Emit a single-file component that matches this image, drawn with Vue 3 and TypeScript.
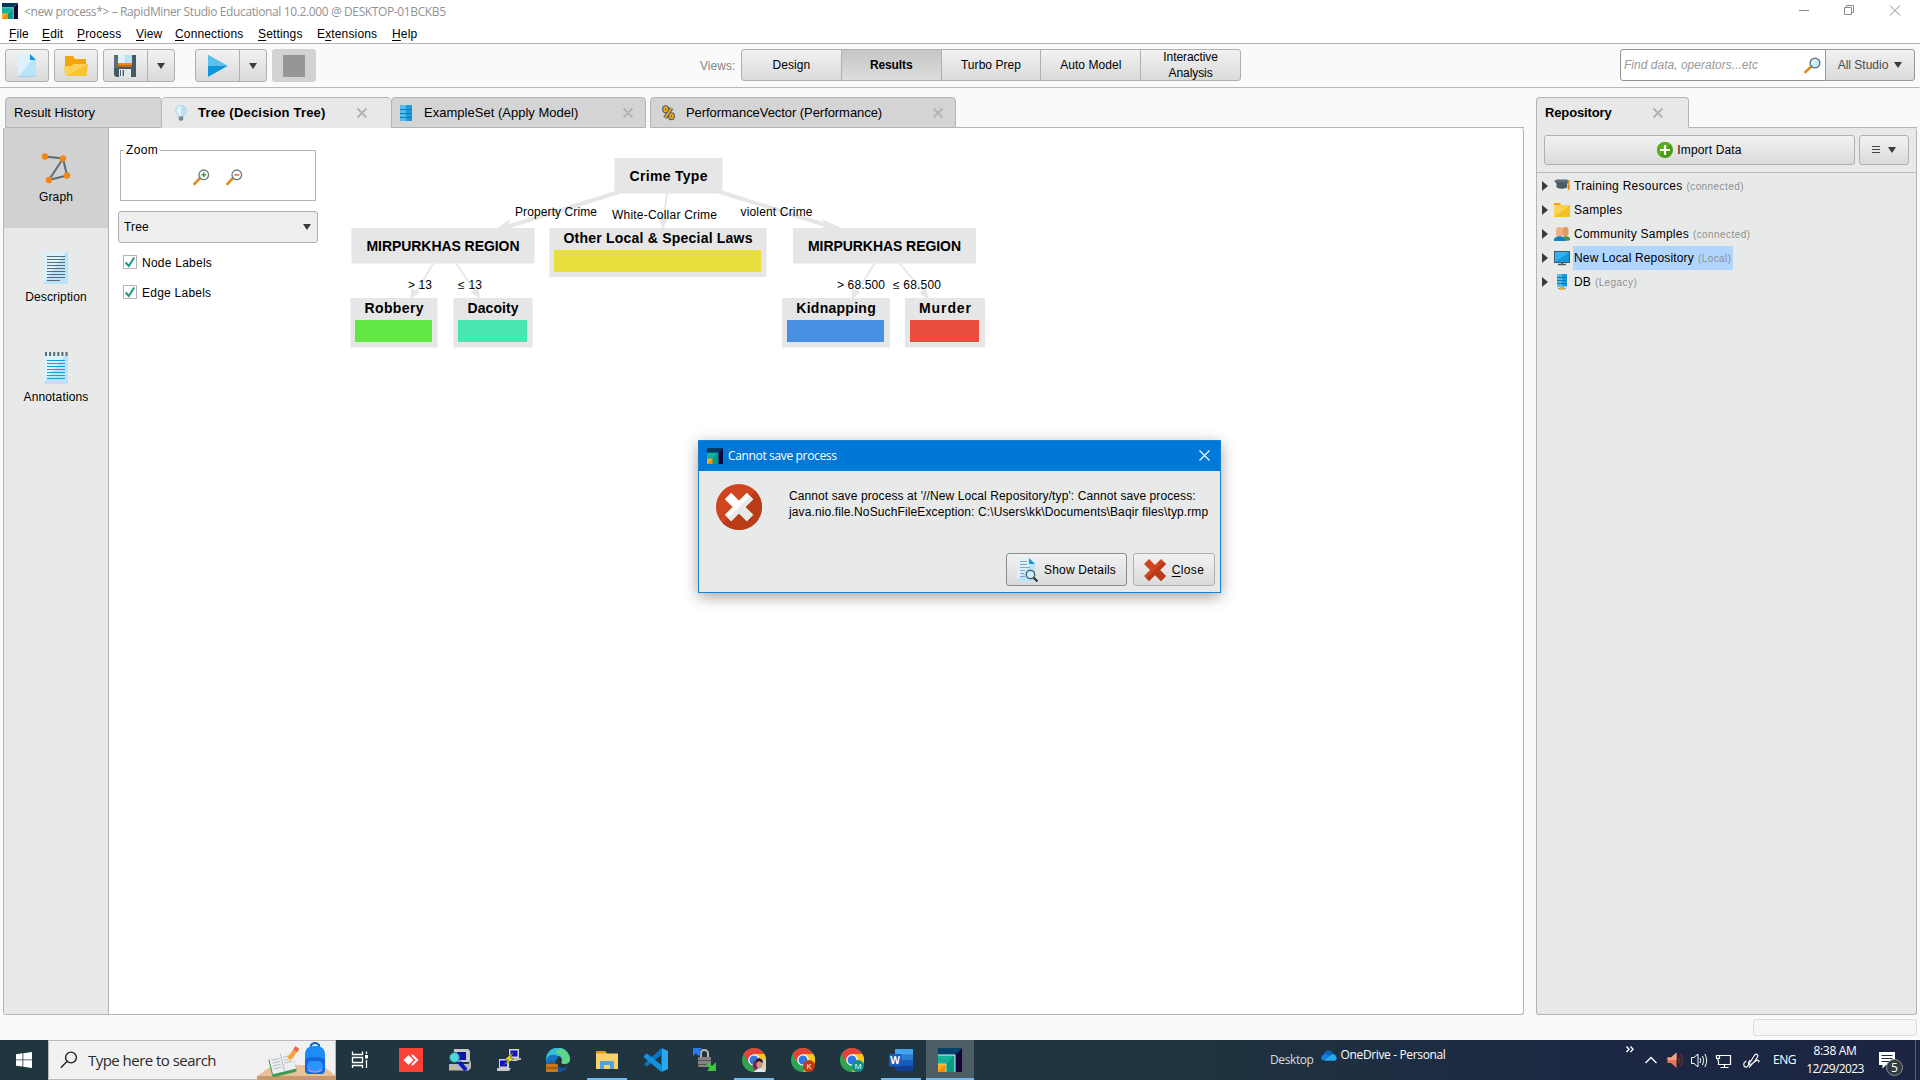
<script setup lang="ts">
interface MenuEntry { pre: string; key: string; post: string; width: number }
interface Tab { label: string; width: number; icon: string; gap: number; spacing: number; active?: boolean; closable?: boolean }
interface TreeNode { x: number; y: number; w: number; h: number; label: string; tw: number; bar?: string; bx?: number; bw?: number }
interface EdgeLabel { x: number; y: number; w: number; text: string }

const menus: MenuEntry[] = [
  { pre: '', key: 'F', post: 'ile', width: 33 },
  { pre: '', key: 'E', post: 'dit', width: 35 },
  { pre: '', key: 'P', post: 'rocess', width: 59 },
  { pre: '', key: 'V', post: 'iew', width: 39 },
  { pre: '', key: 'C', post: 'onnections', width: 83 },
  { pre: '', key: 'S', post: 'ettings', width: 59 },
  { pre: 'E', key: 'x', post: 'tensions', width: 75 },
  { pre: '', key: 'H', post: 'elp', width: 40 },
]

const views = ['Design', 'Results', 'Turbo Prep', 'Auto Model', 'Interactive Analysis']

const tabs: Tab[] = [
  { label: 'Result History', width: 157, icon: '', gap: 0, spacing: 0.01 },
  { label: 'Tree (Decision Tree)', width: 229, icon: 'bulb', gap: 0, spacing: 0.2, active: true, closable: true },
  { label: 'ExampleSet (Apply Model)', width: 255, icon: 'table', gap: 0, spacing: 0.02, closable: true },
  { label: 'PerformanceVector (Performance)', width: 306, icon: 'percent', gap: 4, spacing: -0.06, closable: true },
]

const sideItems = [
  { label: 'Graph', icon: 'graph', active: true },
  { label: 'Description', icon: 'description', active: false },
  { label: 'Annotations', icon: 'annotations', active: false },
]

const nodes: TreeNode[] = [
  { x: 614.5, y: 158, w: 108, h: 35.5, label: 'Crime Type', tw: 78 },
  { x: 351.5, y: 228, w: 183, h: 35.5, label: 'MIRPURKHAS REGION', tw: 153 },
  { x: 549.5, y: 228, w: 217, h: 49, label: 'Other Local & Special Laws', tw: 189, bar: '#e6df3e', bx: 554, bw: 207 },
  { x: 793, y: 228, w: 183, h: 35.5, label: 'MIRPURKHAS REGION', tw: 153 },
  { x: 350.5, y: 298, w: 87, h: 49.5, label: 'Robbery', tw: 59, bar: '#62e643', bx: 355, bw: 77 },
  { x: 453.5, y: 298, w: 79, h: 49.5, label: 'Dacoity', tw: 51, bar: '#48e6b3', bx: 458, bw: 69 },
  { x: 782, y: 298, w: 108, h: 49.5, label: 'Kidnapping', tw: 79.5, bar: '#4a90e2', bx: 787, bw: 97 },
  { x: 905, y: 298, w: 80, h: 49.5, label: 'Murder', tw: 52, bar: '#e84c3d', bx: 910, bw: 69 },
]

const edgeLabels: EdgeLabel[] = [
  { x: 515, y: 216, w: 82, text: 'Property Crime' },
  { x: 612, y: 219, w: 105, text: 'White-Collar Crime' },
  { x: 740.5, y: 216, w: 72, text: 'violent Crime' },
  { x: 408, y: 289, w: 24, text: '> 13' },
  { x: 458, y: 289, w: 24, text: '≤ 13' },
  { x: 837, y: 289, w: 48, text: '> 68.500' },
  { x: 893, y: 289, w: 48, text: '≤ 68.500' },
]

const repos = [
  { name: 'Training Resources', note: '(connected)', icon: 'cap', spacing: 0.27 },
  { name: 'Samples', note: '', icon: 'folder', spacing: 0.27 },
  { name: 'Community Samples', note: '(connected)', icon: 'people', spacing: 0.25 },
  { name: 'New Local Repository', note: '(Local)', icon: 'monitor', spacing: 0.16, selected: true },
  { name: 'DB', note: '(Legacy)', icon: 'db', spacing: 0.1 },
]

const apps = [
  { id: 'task', open: false }, { id: 'anydesk', open: false }, { id: 'remote', open: false },
  { id: 'putty', open: false }, { id: 'edge', open: false }, { id: 'explorer', open: true },
  { id: 'vscode', open: false }, { id: 'winscp', open: false }, { id: 'chrome-photo', open: true },
  { id: 'chrome-k', open: false }, { id: 'chrome-m', open: false }, { id: 'word', open: true },
  { id: 'rapid', open: true, active: true },
]
</script>

<template>
  <div class="screen">
    <header class="titlebar">
      <svg class="logo" width="16" height="16" viewBox="0 0 24 24">
        <path d="M0 0H24L17 7H0z" fill="#04395e" /><path d="M24 0V24H17V7z" fill="#13043c" />
        <path d="M0 7H17L12 12H0z" fill="#12b39b" /><path d="M17 7V24H8V16z" fill="#0b9b85" /><path d="M0 12H12L8 16H0z" fill="#12b39b" />
        <path d="M0 7H17V24" fill="none" stroke="#c8ece6" stroke-width=".8" />
        <rect y="16" width="8" height="8" fill="#ffab1a" /><path d="M8 16V24H0z" fill="#f98a06" />
      </svg>
      <span class="window-title">&lt;new process*&gt; – RapidMiner Studio Educational 10.2.000 @ DESKTOP-01BCKB5</span>
      <svg class="window-controls" width="104" height="12" viewBox="0 0 104 12" fill="none" stroke="#8c8c8c">
        <path d="M0 5.5H10M45.500 2.500H52.500V9.500H45.500zM47.500 2.500V.5H54.500V7.500H52.500M91 0.500L101 10.500M101 .5L91 10.500" />
      </svg>
    </header>

    <nav class="menubar">
      <span v-for="m in menus" :key="m.key" class="menu" :style="{ width: m.width + 'px' }">{{ m.pre }}<u>{{ m.key }}</u>{{ m.post }}</span>
    </nav>

    <div class="toolbar">
      <button class="btn tool">
        <svg width="18" height="23" viewBox="0 0 18 23"><path d="M0 0H12L18 6V23H0z" fill="#b9e3f8" /><path d="M0 0H12L14 6L0 23z" fill="#def2fc" /><path d="M12 0L18 6H12z" fill="#1398dc" /><path d="M0 22.500H18" stroke="#a2d2ea" /></svg>
      </button>
      <button class="btn tool">
        <svg width="24" height="20" viewBox="0 0 24 20"><path d="M1 0H9L11 3H22V17H1z" fill="#f2a40c" /><path d="M0 10L7 10L10 8H24L22.500 20H1.500z" fill="#f7c531" /><path d="M0 10L7 10L10 8H24L3 20H1.500z" fill="#fad25a" /></svg>
      </button>
      <div class="btn split">
        <span class="split-main">
          <svg class="floppy" width="22" height="22" viewBox="0 0 22 22"><path d="M0 0H22V22H2L0 20z" fill="#465a65" /><path d="M0 0H4V13H0z" fill="#5b6e78" /><path d="M4 0H18V9H4z" fill="#b9e3f8" /><path d="M4 0H11V9H4z" fill="#def2fc" /><path d="M4 8H18V10.500H4z" fill="#f08a10" /><path d="M4 10.500H18V12H4z" fill="#d06a00" /><path d="M5 14H17V22H5z" fill="#e4e8ea" /><path d="M6 15H10V21H6z" fill="#465a65" /><path d="M7 15H8.500V21H7z" fill="#fff" /></svg>
        </span>
        <span class="split-drop"><i class="caret"></i></span>
      </div>
      <div class="btn split run">
        <span class="split-main">
          <svg width="20" height="22" viewBox="0 0 20 22"><path d="M0 0L19.500 11L0 22z" fill="#0f97d9" /><path d="M0 0L19.500 11H0z" fill="#5cc0ec" /></svg>
        </span>
        <span class="split-drop"><i class="caret"></i></span>
      </div>
      <button class="btn tool stop"><i></i></button>

      <span class="views-label">Views:</span>
      <div class="views">
        <span v-for="(v, i) in views" :key="v" class="view" :class="{ on: i === 1 }">{{ v }}</span>
      </div>

      <div class="search">
        <span class="placeholder">Find data, operators...etc</span>
        <svg width="17" height="17" viewBox="0 0 17 17"><path d="M7.500 9L1.500 15" stroke="#e08a1c" stroke-width="2.600" stroke-linecap="square" /><circle cx="11" cy="6" r="4.900" fill="#c6e9f9" stroke="#5b7480" stroke-width="1.300" /><path d="M7.700 8A4 4 0 0 1 13 3z" fill="#e6f6fd" /></svg>
      </div>
      <div class="btn scope">All Studio<i class="caret"></i></div>
    </div>

    <main class="workspace">
      <section class="results">
        <div class="tabs">
          <div v-for="t in tabs" :key="t.label" class="tab" :class="{ active: t.active, plain: !t.icon }" :style="{ width: t.width + 'px', marginLeft: t.gap + 'px' }">
            <svg v-if="t.icon === 'bulb'" class="tab-icon bulb" width="12" height="16" viewBox="0 0 12 16"><path d="M6 .5C2.600.5.800 3 .8 5.400C.8 8 3 9 3.500 11.500H8.500C9 9 11.200 8 11.200 5.400C11.200 3 9.400.5 6 .5z" fill="#b9e3f8" stroke="#9cc6da" stroke-width=".6" /><path d="M6 1C3 1 1.500 3 1.500 5.400C1.500 7.500 3.500 8.500 4 11H6z" fill="#e2f4fd" /><path d="M3.800 11.500H8.200V14.500L7 15.800H5L3.800 14.500z" fill="#7a8a92" /></svg>
            <svg v-else-if="t.icon === 'table'" class="tab-icon" width="12" height="16" viewBox="0 0 12 16"><rect width="12" height="16" fill="#1b9bdc" /><rect width="6" height="16" fill="#53baea" /><path d="M0 4.500H12M0 8.500H12M0 12.500H12" stroke="#0c7bb8" /></svg>
            <svg v-else-if="t.icon === 'percent'" class="tab-icon pct" width="13" height="16" viewBox="0 0 13 16" fill="none"><g stroke="#4c5c66" stroke-width="4"><ellipse cx="3.600" cy="4.200" rx="1.500" ry="2" /><ellipse cx="9.400" cy="11.200" rx="1.500" ry="2" /><path d="M9.500 3L3 13" /></g><g stroke="#f0a81c" stroke-width="1.800"><ellipse cx="3.600" cy="4.200" rx="1.500" ry="2" /><ellipse cx="9.400" cy="11.200" rx="1.500" ry="2" /><path d="M9.500 3L3 13" /></g></svg>
            <span class="tab-label" :style="{ letterSpacing: t.spacing + 'px' }">{{ t.label }}</span>
            <svg v-if="t.closable" class="tab-close" width="12" height="12" viewBox="0 0 12 12"><path d="M1.500 1.500L10.500 10.500M10.500 1.500L1.500 10.500" stroke="#b4b4b4" stroke-width="2" /></svg>
          </div>
          <div class="tab-rest"></div>
        </div>

        <div class="panel">
          <aside class="sidebar">
            <div v-for="s in sideItems" :key="s.label" class="side-item" :class="{ active: s.active }">
              <svg width="32" height="32" viewBox="0 0 32 32">
                <template v-if="s.icon === 'graph'">
                  <path d="M5 4.500L23 6.500L27 23.500L9 28L23 6.500" fill="none" stroke="#5b6c76" stroke-width="2" />
                  <g fill="#f5870f"><circle cx="5" cy="4.500" r="3.200" /><circle cx="23" cy="6.500" r="3.200" /><circle cx="27" cy="23.500" r="3.200" /><circle cx="9" cy="28" r="3.200" /></g>
                </template>
                <template v-else-if="s.icon === 'description'">
                  <rect x="4" width="24" height="32" fill="#b9e3f8" /><path d="M4 0H26L4 31z" fill="#dbf1fc" /><path d="M7 4.500H25M7 7.500H25M7 10.500H25M7 13.500H25M7 16.500H25M7 19.500H25M7 22.500H25M7 25.500H25M7 28.500H20" stroke="#5b6c76" />
                </template>
                <template v-else>
                  <rect x="4" y="2" width="24" height="30" fill="#b9e3f8" /><path d="M4 2H26L4 31z" fill="#dbf1fc" /><path d="M5 2H28" stroke="#5b6c76" stroke-width="4" stroke-dasharray="2 2.100" /><path d="M7 8.500H25M7 11.500H25M7 14.500H25M7 17.500H25M7 20.500H25M7 23.500H25M7 26.500H25" stroke="#1b9bdc" />
                </template>
              </svg>
              <span>{{ s.label }}</span>
            </div>
          </aside>

          <div class="controls">
            <fieldset class="zoom-box">
              <legend>Zoom</legend>
              <svg v-for="k in 2" :key="k" width="17" height="17" viewBox="0 0 17 17"><path d="M6.500 9.500L1.500 14.800" stroke="#e08a1c" stroke-width="2.600" stroke-linecap="square" /><circle cx="10.800" cy="5.800" r="4.800" fill="#fbfdfe" stroke="#6b7c86" stroke-width="1.300" /><path v-if="k === 1" d="M8.300 5.800H13.300M10.800 3.300V8.300" stroke="#3c9418" stroke-width="1.300" /><path v-else d="M8.300 5.800H13.300" stroke="#d6492a" stroke-width="1.300" /></svg>
            </fieldset>
            <div class="combo">Tree<i class="caret"></i></div>
            <label v-for="c in ['Node Labels', 'Edge Labels']" :key="c" class="check">
              <svg width="14" height="14" viewBox="0 0 14 14"><rect x=".5" y=".5" width="13" height="13" fill="#fff" stroke="#b4b4b4" /><path d="M2.600 7.500L5.800 11L11.200 2.500" fill="none" stroke="#1e9c88" stroke-width="2" /></svg><span>{{ c }}</span>
            </label>
          </div>

          <svg class="tree" width="660" height="240" viewBox="340 128 660 240">
            <g stroke="#e6e6e6" fill="none">
              <path d="M619 192L507 227M720 192L832 227" stroke-width="4" />
              <path d="M667 193L663.500 220M433.500 263L415 294M456 263L476 293M875 263L855 294M899 263L925 293" stroke-width="1.800" />
            </g>
            <g fill="#e6e6e6">
              <path d="M496 229L510 219L509 225L514 229zM843 229L822 219L825 225L822 229z" />
              <path d="M663 229L658.500 217H668zM411 299L411 288L419.500 292zM480 299L471 292L478.500 288zM852 299L852 288L860.500 292zM928.500 299L919 293L926.500 288z" />
            </g>
            <g v-for="(n, i) in nodes" :key="i">
              <rect :x="n.x" :y="n.y" :width="n.w" :height="n.h" fill="#e6e6e6" />
              <rect v-if="n.bar" :x="n.bx" :y="n.y + 22" :width="n.bw" height="22" :fill="n.bar" />
              <text class="node-text" :x="n.x + (n.w - n.tw) / 2" :y="n.y + (n.bar ? 15 : 23)" :textLength="n.tw">{{ n.label }}</text>
            </g>
            <text v-for="e in edgeLabels" :key="e.text" class="edge-text" :x="e.x" :y="e.y" :textLength="e.w">{{ e.text }}</text>
          </svg>
        </div>
      </section>

      <section class="repository">
        <div class="tabs">
          <div class="tab repo-tab">
            <span class="repo-title">Repository</span>
            <svg class="tab-close" width="12" height="12" viewBox="0 0 12 12"><path d="M1.500 1.500L10.500 10.500M10.500 1.500L1.500 10.500" stroke="#b4b4b4" stroke-width="2" /></svg>
          </div>
          <div class="tab-rest"></div>
        </div>
        <div class="repo-panel">
          <div class="repo-actions">
            <button class="btn import">
              <svg width="16" height="16" viewBox="0 0 16 16"><circle cx="8" cy="8" r="8" fill="#4c9a14" /><path d="M2.300 13.700A8 8 0 0 1 13.700 2.300z" fill="#5cae20" /><path d="M8 3V13M3 8H13" stroke="#fff" stroke-width="2.200" /></svg>
              Import Data
            </button>
            <button class="btn more"><svg width="8" height="8" viewBox="0 0 8 8"><path d="M0 .5H8M0 3.500H8M0 6.500H8" stroke="#444" /></svg><i class="caret"></i></button>
          </div>
          <ul class="repo-list">
            <li v-for="r in repos" :key="r.name">
              <i class="expand"></i>
              <svg width="16" height="16" viewBox="0 0 16 16">
                <template v-if="r.icon === 'cap'"><path d="M0 3L3 1.500H13L16 3L13 6H3z" fill="#5b6c76" /><path d="M2.500 4.500H13V9.500Q8 12 2.500 9.500z" fill="#4a5b66" /><path d="M14.500 2V8" stroke="#e6841a" stroke-width="1.500" /><path d="M13.500 7H16L15.500 12H13.800z" fill="#ef8a14" /></template>
                <template v-else-if="r.icon === 'folder'"><path d="M0 1H6L7 3H16V8H0z" fill="#f2a40c" /><rect y="3" width="16" height="12" fill="#f5bf28" /><path d="M0 3H16L0 15z" fill="#fad25a" /></template>
                <template v-else-if="r.icon === 'people'"><rect x="8" y="1" width="6.500" height="9" rx="3" fill="#e09a66" /><path d="M8 15V12Q12 8 16 12V14Q15 15 8 15" fill="#4c9a3a" /><rect x="2" y="1" width="7" height="10" rx="3.300" fill="#f0b083" /><path d="M0 15V12.500Q5.500 8 11 12.500V15z" fill="#1180c8" /></template>
                <template v-else-if="r.icon === 'monitor'"><rect y="1" width="16" height="12" fill="#465a65" /><rect x="1" y="2" width="14" height="10" fill="#1398dc" /><path d="M1 2H15L1 12z" fill="#2eb4f0" /><path d="M4 14.500H12M8 12V15" stroke="#465a65" stroke-width="1.500" /></template>
                <template v-else><rect x="3" width="10" height="12.500" fill="#1b9bdc" /><rect x="3" width="5" height="12.500" fill="#53baea" /><path d="M3 3.500H13M3 6.500H13M3 9.500H13" stroke="#0c7bb8" /><path d="M4 14.500H12" stroke="#90a0a8" stroke-width="1.500" /><rect x="6" y="13" width="4" height="3" fill="#f0a81c" /></template>
              </svg>
              <span class="repo-name" :class="{ selected: r.selected }" :style="{ letterSpacing: r.spacing + 'px' }">{{ r.name }}<small v-if="r.note">{{ r.note }}</small></span>
            </li>
          </ul>
        </div>
      </section>
    </main>

    <div class="statusbar"><div class="status-box"></div></div>

    <footer class="taskbar">
      <div class="start"><svg width="16" height="16" viewBox="0 0 16 16" fill="#fff"><path d="M0 2.200L6.500 1.300V7.500H0zM7.300 1.200L16 0V7.500H7.300zM0 8.300H6.500V14.600L0 13.700zM7.300 8.300H16V16L7.300 14.700z" /></svg></div>
      <div class="task-search">
        <svg width="18" height="18" viewBox="0 0 18 18" fill="none" stroke="#222" stroke-width="1.400"><circle cx="11" cy="6.500" r="5.400" /><path d="M7 10.500L.8 16.800" /></svg>
        <span>Type here to search</span>
        <svg class="art" width="79" height="38" viewBox="0 0 79 38">
          <path d="M0 34L16 23H65L79 34z" fill="#e6c19a" /><path d="M0 34H79V38H0z" fill="#c69a6c" />
          <g transform="translate(12 9) rotate(-14 12 10)"><rect x="0" y="5" width="25" height="19" rx="2" fill="#3f9a52" /><rect x="1" y="3" width="24" height="18" rx="1" fill="#eceef2" /><path d="M13 3V21" stroke="#b6bcc8" /><path d="M3 7H11M3 10H11M3 13H11M3 16H11M15 7H23M15 10H23M15 13H23" stroke="#aeb4be" stroke-width=".8" /></g>
          <path d="M32 17L38 9" stroke="#f6a73a" stroke-width="4.500" /><path d="M38 9L40.500 5.500" stroke="#f06848" stroke-width="4.800" /><path d="M29.500 20.500L31 16L34 18.500z" fill="#f6d7b0" />
          <path d="M54 6V3Q58-1 62 3V6" fill="none" stroke="#1465c8" stroke-width="2" /><rect x="48" y="4" width="20" height="28" rx="8" fill="#1b8cf8" /><path d="M48 17V28Q48 32 52 32H64Q68 32 68 28V17Q58 13 48 17z" fill="#1667dd" /><rect x="50" y="19" width="16" height="11" rx="5" fill="#2a94ff" /><path d="M51 28Q58 32 65 28" stroke="#b48cf8" stroke-width="1.600" fill="none" />
        </svg>
      </div>

      <div v-for="a in apps" :key="a.id" class="app" :class="[a.id, { active: a.active, open: a.open }]">
        <svg width="24" height="24" viewBox="0 0 24 24">
          <template v-if="a.id === 'task'"><g fill="none" stroke="#fff" stroke-width="1.300"><path d="M4.500 3.500V6.500H14.500V3.500M4.500 20V17.500H14.500V20M4.500 9.500H14.500V14.500H4.500zM18.500 3.500V6M18.500 12V20" /></g><rect x="17" y="7" width="3" height="3.500" fill="#fff" /></template>
          <template v-else-if="a.id === 'anydesk'"><rect width="24" height="24" fill="#fb4036" /><path d="M4.500 12L9.500 7L14.500 12L9.500 17z" fill="#fff" /><path d="M13 7L18 12L13 17" fill="none" stroke="#fff" stroke-width="2" /></template>
          <template v-else-if="a.id === 'remote'"><path d="M6 1H20L22 3V14H6z" fill="#c8c8c8" /><rect x="9" y="4" width="9" height="8" fill="#0a18a8" /><path d="M1 16H20L23 13V20L20 23H1z" fill="#b8b8b8" /><path d="M1 23H20" stroke="#333" /><circle cx="6.500" cy="9.500" r="5" fill="#4cd6d8" stroke="#1c5f78" /><path d="M11 14L18 22" stroke="#0c1cc8" stroke-width="4" /><rect x="3" y="19" width="3" height="2" fill="#d8c820" /></template>
          <template v-else-if="a.id === 'putty'"><path d="M12 1H22V12L19 13H12z" fill="#d4d4d4" /><rect x="13.500" y="2.500" width="7" height="6" fill="#1010c8" /><path d="M14 10H24V12H14z" fill="#bbb" /><path d="M2 11H12V20H2z" fill="#d4d4d4" /><rect x="3" y="12.500" width="7" height="6" fill="#1010c8" /><path d="M0 20H14L12 23H0z" fill="#c8c8c8" /><path d="M17 4L8 11L12 12L5 18L17 11L13 10z" fill="#f4e800" stroke="#333" stroke-width=".5" /></template>
          <template v-else-if="a.id === 'edge'"><path d="M0 12A12 12 0 0 1 24 11Q24 16 18 16Q14.500 16 16 13Q16 8 11 8Q4 8 0 14z" fill="#36bfd8" /><path d="M14 .3A12 12 0 0 1 24 11Q24 16 18 16Q14.500 16 16 13Q17 6 9 5z" fill="#5fd58a" /><path d="M0 12Q3 6 9 7Q13 8 12 10Q8 12 10 17Q14 22 21 19Q17 24 12 24Q0 24 0 12z" fill="#1272c4" /><path d="M9.500 12Q9 18 14 20Q18 21 22 18Q19 24 12 24Q7 21 9.500 12" fill="#12519c" /><rect y="16" width="12" height="8" rx="1" fill="#c87818" /><path d="M4 16V14.500H8V16M0 20H12" stroke="#7c4408" fill="none" /></template>
          <template v-else-if="a.id === 'explorer'"><path d="M1 3H10L12 5.500H23V21H1z" fill="#fbd268" /><path d="M1 3H10L12 5.500H1z" fill="#dda014" /><path d="M5 21V14Q5 13 6 13H18Q19 13 19 14V21H15V17H9V21z" fill="#4ba4e4" /></template>
          <template v-else-if="a.id === 'vscode'"><path d="M17.500 0L24 3V21L17.500 24z" fill="#28a8ee" /><path d="M17.500 0V7L3 18.500L0 16.500L1 15z" fill="#0b74c0" /><path d="M0 7.500L3 5.500L17.500 17V24L0 9.500z" fill="#1590dc" /></template>
          <template v-else-if="a.id === 'winscp'"><path d="M8 10V5Q8 2 11 2Q15 2 15 6V10" fill="none" stroke="#b8b8b8" stroke-width="2" /><rect x="5" y="9" width="13" height="10" rx="1" fill="#858585" /><path d="M5 12.500H18M5 16.500H18" stroke="#555" /><path d="M0 0H9L6.500 2.500L8 6L5 8L3 5L0 8z" fill="#2a7cf0" /><path d="M23 23H14L16.500 20L13 17L16 14.500L19 18L23 14z" fill="#3ac83c" /></template>
          <template v-else-if="a.id.startsWith('chrome')">
            <circle cx="12" cy="12" r="12" fill="#2da44f" /><path d="M1.600 6A12 12 0 0 1 22.400 6H12L6.800 15z" fill="#e5423a" /><path d="M22.400 6A12 12 0 0 1 12 24L17.200 15L12 6z" fill="#fbc61a" /><circle cx="12" cy="12" r="5.800" fill="#fff" /><circle cx="12" cy="12" r="4.500" fill="#2d78e8" />
            <template v-if="a.id === 'chrome-photo'"><circle cx="18" cy="17.500" r="7.500" fill="#d8d0b8" /><path d="M10.500 17A7.500 7.500 0 0 1 18 10V25Q11 24 10.500 17" fill="#7a2458" /><path d="M12 24Q18 16 24 24z" fill="#dce8f0" /><ellipse cx="17.500" cy="16" rx="3" ry="4.200" fill="#c8967c" /><path d="M14 15Q14 10 18 10.500Q21 11 21 15L17 13z" fill="#2a1a1c" /></template>
            <template v-else><circle cx="18" cy="18" r="6" :fill="a.id === 'chrome-k' ? '#c23a12' : '#0e8f84'" /><text x="18" y="20.800" class="badge-text">{{ a.id === 'chrome-k' ? 'K' : 'M' }}</text></template>
          </template>
          <template v-else-if="a.id === 'word'"><rect x="6" y="1" width="18" height="22" rx="1" fill="#2b7cd3" /><path d="M6 1H23Q24 1 24 2V6.500H6z" fill="#41a5ee" /><path d="M6 12H24V17.500H6z" fill="#185abd" /><path d="M6 17.500H24V22Q24 23 23 23H6z" fill="#103f91" /><rect y="6" width="12.500" height="12.500" rx="1" fill="#185abd" /><text x="6.200" y="15.800" class="word-text">W</text></template>
          <template v-else><path d="M0 0H24L17 7H0z" fill="#04426b" /><path d="M24 0V24H17V7z" fill="#13043c" /><path d="M0 7H17L12 12.500H0z" fill="#12b39b" /><path d="M17 7V24H8V16z" fill="#0b9b85" /><path d="M0 12.500H12L8 16H0z" fill="#12b39b" /><path d="M0 7H17V24" fill="none" stroke="#d8f2ee" /><rect y="16" width="8" height="8" fill="#ffab1a" /><path d="M8 16V24H0z" fill="#f98a06" /><path d="M0 16H8V24" fill="none" stroke="#fbe6c0" stroke-width=".7" /></template>
        </svg>
      </div>

      <div class="desk-links">
        <span class="desktop">Desktop</span>
        <svg width="16" height="11" viewBox="0 0 16 11"><path d="M2 6Q3 1 7.500.5Q11 .3 12.500 4L8 8z" fill="#0b64b8" /><path d="M1 10Q-1 6 3 4.500Q6 3.500 9 6L13 10z" fill="#1280d8" /><path d="M3 10.800L9 5.800Q12.500 3 14.500 5.500Q17 9 14 10.800z" fill="#2aa8f0" /></svg>
        <span class="onedrive">OneDrive - Personal</span>
      </div>
      <div class="tray">
        <svg width="148" height="40" viewBox="1617 1040 148 40" fill="none" stroke="#fff">
          <path d="M1626.500 1046.500L1629 1049.300L1626.500 1052M1630.500 1046.500L1633 1049.300L1630.500 1052" stroke-width="1.400" />
          <path d="M1645.500 1063L1651 1057.500L1656.500 1063" stroke-width="1.300" />
          <path d="M1667.500 1057.500H1671L1676.500 1052.500V1068L1671 1063H1667.500z" fill="#e87450" stroke="none" /><path d="M1671 1057.500L1676.500 1052.500V1060H1667.500V1057.500z" fill="#f3a083" stroke="none" /><path d="M1678.500 1057Q1680.500 1060 1678.500 1063.500M1680.500 1054.500Q1684 1060 1680.500 1066" stroke="#6e2c22" stroke-width="1.500" />
          <path d="M1691.500 1057.500H1694L1698 1054V1067L1694 1063.500H1691.500zM1700 1058Q1701.500 1060.500 1700 1063M1702.500 1056Q1705 1060.500 1702.500 1065M1704.800 1054Q1708.500 1060.500 1704.800 1067" />
          <path d="M1720 1055.500H1730.500V1064.500H1718.500V1061M1724.500 1064.500V1067.500M1720.500 1067.500H1728.500M1716.500 1055.500H1719.500V1058.500H1716.500zM1718 1058.500V1061" stroke-width="1.200" />
          <path d="M1746.500 1061Q1743 1062.500 1744 1066Q1747 1069 1749 1064L1754 1056Q1756.500 1052.500 1758 1055.500Q1758 1058 1749 1067.500M1750 1060Q1746 1066 1751 1064.500L1757 1060Q1760 1060 1758.500 1062.500" stroke-width="1.100" />
        </svg>
        <span class="lang">ENG</span>
        <div class="clock"><span class="time">8:38 AM</span><span class="date">12/29/2023</span></div>
        <svg class="notify" width="24" height="26" viewBox="0 0 24 26"><path d="M0 0H16V13H7L3.500 16.500V13H0z" fill="#fff" /><path d="M2.500 3.500H13.500M2.500 6.500H13.500M2.500 9.500H10" stroke="#1b2843" /><circle cx="15.500" cy="15.500" r="8" fill="#333a40" stroke="#8a9098" /><text x="15.500" y="20" class="count">5</text></svg>
      </div>
    </footer>

    <div class="dialog" role="alertdialog">
      <div class="dialog-head">
        <svg width="16" height="16" viewBox="0 0 24 24">
          <path d="M0 0H24L17 7H0z" fill="#04395e" /><path d="M24 0V24H17V7z" fill="#13043c" /><path d="M0 7H17L12 12H0z" fill="#12b39b" /><path d="M17 7V24H8V16z" fill="#0b9b85" /><path d="M0 12H12L8 16H0z" fill="#12b39b" /><rect y="16" width="8" height="8" fill="#ffab1a" /><path d="M8 16V24H0z" fill="#f98a06" />
        </svg>
        <span>Cannot save process</span>
        <svg class="dialog-x" width="11" height="11" viewBox="0 0 11 11"><path d="M.5.5L10.500 10.500M10.500.5L.5 10.500" stroke="#fff" stroke-width="1.100" /></svg>
      </div>
      <div class="dialog-body">
        <svg class="error" width="46" height="46" viewBox="0 0 46 46"><defs><clipPath id="half"><path d="M46 0V46H0z" /></clipPath></defs><circle cx="23" cy="23" r="23" fill="#cf4520" /><circle cx="23" cy="23" r="23" fill="#b83c18" clip-path="url(#half)" /><path d="M12 12L34 34M34 12L12 34" stroke="#fff" stroke-width="9" /><path d="M12 12L34 34M34 12L12 34" stroke="#e8e8e8" stroke-width="9" clip-path="url(#half)" /></svg>
        <p><span class="line1">Cannot save process at '//New Local Repository/typ': Cannot save process:</span><br />java.nio.file.NoSuchFileException: C:\Users\kk\Documents\Baqir files\typ.rmp</p>
      </div>
      <div class="dialog-foot">
        <button class="btn details">
          <svg width="22" height="24" viewBox="0 0 22 24"><path d="M0 0H12L18 6V23H0z" fill="#b9e3f8" /><path d="M0 0H12L14 6L0 23z" fill="#def2fc" /><path d="M12 0L18 6H12z" fill="#1398dc" /><path d="M3 3.500H10M3 6.500H10M3 9.500H13M3 12.500H8M3 15.500H7M3 18.500H8" stroke="#86a6b4" /><circle cx="13.500" cy="16.500" r="4.200" fill="#cdeefb" stroke="#4a5b66" stroke-width="1.300" /><path d="M16.500 19.500L20.500 23.500" stroke="#333" stroke-width="2.200" /></svg>
          Show Details
        </button>
        <button class="btn close">
          <svg width="22" height="22" viewBox="0 0 22 22"><path d="M5 0L11 6L17 0L22 5L16 11L22 17L17 22L11 16L5 22L0 17L6 11L0 5z" fill="#cf4520" /><path d="M22 5L16 11L22 17L17 22L11 16L5 22L2.500 19.500L19.500 2.500z" fill="#b83c18" /></svg>
          <span><u>C</u>lose</span>
        </button>
      </div>
    </div>
  </div>
</template>

<style>
html, body { margin: 0; overflow: hidden; }
</style>

<style scoped>
* { box-sizing: border-box; }
.screen { position: relative; display: flex; flex-direction: column; width: 1920px; height: 1080px; overflow: hidden; background: #fafafa; color: #000; font: 12px/16px "Liberation Sans", Arial, sans-serif; letter-spacing: 0.15px; white-space: nowrap; }
svg { display: block; flex: none; }
button { margin: 0; padding: 0; font: inherit; letter-spacing: inherit; color: inherit; }

.titlebar { display: flex; align-items: center; height: 24px; padding-left: 2px; background: #fff; }
.logo { margin-top: -2px; }
.window-title { margin-left: 6px; color: #929292; font-family: "Open Sans", sans-serif; letter-spacing: -0.38px; }
.window-controls { margin: -3px 17px 0 auto; }

.menubar { display: flex; height: 20px; padding: 2px 0 0 9px; background: #fff; border-bottom: 1px solid #b4b4b4; }
.menu u, .close u { text-underline-offset: 2px; text-decoration-thickness: 1px; }

.toolbar { display: flex; flex: none; height: 44px; padding: 5px 5px 0; border-bottom: 1px solid #b8b8b8; }
.btn { display: flex; align-items: center; justify-content: center; height: 33px; border: 1px solid #b0b0b0; border-radius: 3px; background: linear-gradient(#f2f2f2, #dadada); }
.tool { width: 44px; margin-right: 5px; }
.caret { display: block; width: 0; border: 4.500px solid transparent; border-top: 6px solid #3c3c3c; border-bottom: 0; }
.split { width: 72px; }
.split-main { display: flex; align-items: center; justify-content: center; width: 44px; height: 100%; border-right: 1px solid #b0b0b0; }
.floppy { margin-right: 1px; }
.split-drop { display: flex; flex: 1; justify-content: center; }
.run { margin: 0 5px 0 20px; }
.stop { border-color: #d2d2d2; background: #d2d2d2; margin: 0; }
.stop i { width: 22px; height: 22px; background: #969696; }
.views-label { width: 41px; margin: 9px 0 0 384px; color: #858585; letter-spacing: 0.06px; }
.views { display: flex; width: 500px; height: 32px; border: 1px solid #b0b0b0; border-radius: 3px; background: linear-gradient(#f2f2f2, #dadada); }
.view { display: flex; flex: 1; align-items: center; justify-content: center; padding: 0 14px 1px; text-align: center; white-space: normal; letter-spacing: 0.05px; line-height: 16px; border-right: 1px solid #b0b0b0; }
.view:last-child { border: 0; letter-spacing: -0.08px; }
.view.on { font-weight: bold; letter-spacing: -0.12px; background: linear-gradient(#c6c6c6, #dcdcdc); }
.search { display: flex; align-items: center; justify-content: space-between; width: 206px; height: 32px; margin-left: 379px; padding: 0 4px 0 3px; border: 1px solid #929292; border-radius: 3px 0 0 3px; background: #fff; }
.placeholder { color: #999; font-style: italic; letter-spacing: 0.02px; }
.scope { width: 90px; height: 32px; margin-left: -1px; gap: 6px; color: #4a4a4a; letter-spacing: 0; border-color: #999; border-radius: 0 3px 3px 0; }

.workspace { display: flex; flex: 1; min-height: 0; padding: 9px 3px 0; }
.results { display: flex; flex-direction: column; width: 1521px; }
.tabs { display: flex; height: 31px; padding-left: 2px; }
.tab { position: relative; display: flex; flex: none; align-items: center; height: 31px; border: 1px solid #b4b4b4; border-radius: 4px 4px 0 0; background: #d4d4d4; font-size: 13px; }
.tab:not(.active):not(:first-child) { padding-left: 8px; }
.tab.active { padding-left: 13px; font-weight: bold; background: #e8e8e8; border-bottom-color: #e8e8e8; border-left: 0; border-right: 0; }
.tab.plain { padding-left: 8px; }
.tab-icon { margin-right: 12px; }
.bulb { margin-right: 11px; }
.pct { margin: 0 11px 0 3px; }
.tab-close { margin: 0 11px 0 auto; }
.active .tab-close { margin-right: 23px; }
.tab-rest { flex: 1; border-bottom: 1px solid #b4b4b4; }
.panel { display: flex; height: 887px; background: #fff; border: 1px solid #b4b4b4; border-top: 0; border-radius: 0 3px 3px 3px; overflow: hidden; }
.sidebar { width: 105px; background: #e8eae9; border-right: 1px solid #b4b4b4; }
.side-item { display: flex; flex-direction: column; align-items: center; height: 100px; padding-top: 24px; gap: 5px; }
.side-item.active { background: #d0d1d0; }
.controls { width: 220px; padding: 14px 0 0 9px; }
.zoom-box { display: flex; align-items: center; justify-content: center; gap: 16px; width: 196px; height: 59px; margin: 0 0 10px 2px; padding: 0 0 3px; border: 1px solid #b4b4b4; }
.zoom-box legend { margin-left: 3px; padding: 0 2px; letter-spacing: 0.33px; }
.combo { display: flex; align-items: center; justify-content: space-between; width: 200px; height: 32px; padding: 0 6px 0 5px; border: 1px solid #b0b0b0; border-radius: 3px; background: #eee; }
.check { display: flex; align-items: center; gap: 5px; height: 16px; margin: 11px 0 0 5px; letter-spacing: 0.24px; }
.check span { padding-top: 1px; }
.check + .check { margin-top: 14px; }
.tree { margin-left: 11px; }
.node-text { font-size: 14px; font-weight: bold; letter-spacing: 0; }
.edge-text { font-size: 12px; letter-spacing: 0; }

.repository { display: flex; flex-direction: column; width: 381px; margin-left: 12px; }
.repository .tabs { padding-left: 0; }
.tab.repo-tab { width: 153px; background: #e8e8e8; border-bottom-color: #e8e8e8; padding-left: 8px; }
.repo-title { font-weight: bold; letter-spacing: -0.14px; }
.repo-tab .tab-close { margin-right: 24px; }
.repo-panel { height: 887px; background: #e8eae9; border: 1px solid #b4b4b4; border-top: 0; border-radius: 0 3px 3px 3px; }
.repo-actions { display: flex; gap: 4px; height: 45px; padding: 7px 7px 0; border-bottom: 1px solid #b8b8b8; }
.import { width: 311px; height: 30px; gap: 4px; }
.more { width: 50px; height: 30px; gap: 8px; }
.repo-list { margin: 0; padding: 1px 0 0; list-style: none; }
.repo-list li { display: flex; align-items: center; height: 24px; padding-left: 5px; }
.expand { width: 0; margin-right: 6px; border: 5px solid transparent; border-left: 6px solid #3c3c3c; border-right: 0; }
.repo-name { height: 24px; margin-left: 3px; padding: 0 2px 0 1px; line-height: 25px; }
.repo-name.selected { background: #b0d6ff; }
small { margin-left: 4px; color: #8f8f8f; font-size: 10px; letter-spacing: 0.42px; }

.results { width: 1522px; }

.statusbar { display: flex; justify-content: flex-end; flex: none; height: 25px; padding: 4px 3px 0 0; }
.status-box { width: 164px; height: 17px; border: 1px solid #dcdcdc; border-radius: 3px; background: #f6f6f6; }

.taskbar { display: flex; flex: none; height: 40px; color: #fff; font-family: "Open Sans", sans-serif; background: linear-gradient(90deg, #20363f, #20343f 60%, #1b2743 85%, #1b2541); }
.start { display: flex; align-items: center; justify-content: center; width: 48px; }
.task-search { display: flex; align-items: center; width: 288px; padding-left: 11px; border: 1px solid #b8b8b8; background: #f1f1f1; color: #2a2a2a; font-size: 15px; letter-spacing: -0.53px; }
.task-search span { flex: 1; margin-left: 10px; }
.art { align-self: flex-end; margin: 0 -1px -1px 0; }
.app { display: flex; align-items: center; justify-content: center; width: 49.100px; border-bottom: 2px solid transparent; padding-top: 2px; background-clip: padding-box; }
.app.task { width: 50px; padding-right: 3px; }
.app.open { border-bottom: 0; padding: 0; background: linear-gradient(#76b9ed, #76b9ed) center bottom / 40px 2px no-repeat; }
.app.active { width: 48px; border-bottom: 2px solid #76b9ed; padding-top: 2px; background: #4d5d65; }
.badge-text { fill: #fff; font: 8px "Open Sans", sans-serif; text-anchor: middle; letter-spacing: 0; }
.word-text { fill: #fff; font: bold 10px "Open Sans", sans-serif; text-anchor: middle; letter-spacing: 0; }
.desk-links { display: flex; width: 176px; margin-left: 296px; letter-spacing: -0.4px; }
.desk-links svg { margin: 10px 4px 0 7px; }
.desktop { margin-top: 12px; color: #d8dcdf; }
.onedrive { margin-top: 7px; letter-spacing: -0.36px; }
.tray { display: flex; margin: 0 4px 0 auto; border-right: 1px solid #56617a; }
.lang { width: 33px; margin: 12px 0 0 8px; letter-spacing: -0.45px; }
.clock { display: flex; flex-direction: column; align-items: center; width: 58px; padding-top: 3px; gap: 2px; }
.time { letter-spacing: -0.32px; }
.date { letter-spacing: -0.62px; }
.notify { margin: 12px 12px 0 15px; }
.count { fill: #fff; font: 12px "Open Sans", sans-serif; text-anchor: middle; letter-spacing: 0; }

.dialog { position: absolute; left: 698px; top: 440px; width: 523px; height: 153px; border: 1px solid #1a80d0; background: #e8eae9; box-shadow: 0 4px 14px rgba(0, 0, 0, 0.36); }
.dialog-head { display: flex; align-items: center; height: 30px; padding-left: 8px; background: #0078d7; color: #fff; font-family: "Open Sans", sans-serif; letter-spacing: -0.35px; }
.dialog-head span { margin-left: 5px; }
.dialog-x { margin: -2px 10px 0 auto; }
.dialog-body { display: flex; height: 82px; padding: 13px 0 0 17px; }
.dialog-body p { margin: 4px 0 0 27px; letter-spacing: 0.12px; }
.line1 { letter-spacing: 0.1px; }
.dialog-foot { display: flex; justify-content: flex-end; gap: 6px; padding-right: 5px; }
.details { width: 121px; gap: 5px; border-color: #8c8c8c; }
.close { width: 82px; gap: 6px; letter-spacing: 0.36px; }
</style>
